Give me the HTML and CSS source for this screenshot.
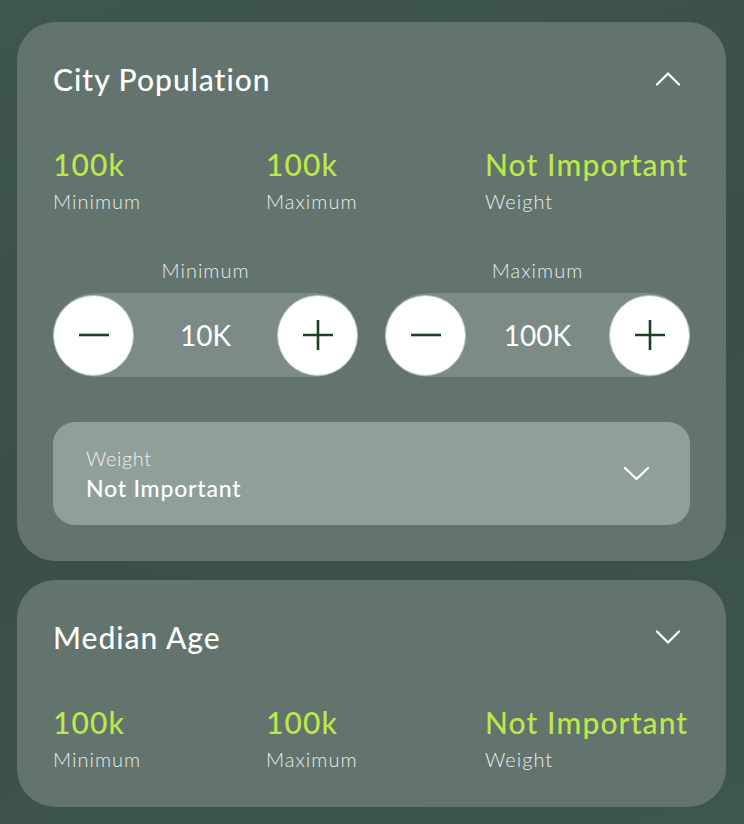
FILE: index.html
```html
<!DOCTYPE html>
<html lang="en">
<head>
    <meta charset="UTF-8">
    <meta name="viewport" content="width=device-width, initial-scale=1.0">
    <title>Filters</title>
    <link rel="stylesheet" href="styles.css">
</head>
<body>
    <div class="filters">
        <section class="card">
            <div class="card-header">
                <h2>City Population</h2>
                <svg class="chevron" width="26" height="14" viewBox="0 0 26 14"><path d="M2 12.5 L13 1.5 L24 12.5" /></svg>
            </div>

            <div class="stats">
                <div class="stat">
                    <span class="stat-value">100k</span>
                    <span class="stat-label">Minimum</span>
                </div>
                <div class="stat">
                    <span class="stat-value">100k</span>
                    <span class="stat-label">Maximum</span>
                </div>
                <div class="stat">
                    <span class="stat-value">Not Important</span>
                    <span class="stat-label">Weight</span>
                </div>
            </div>

            <div class="steppers">
                <div class="stepper-group">
                    <span class="stepper-title">Minimum</span>
                    <div class="stepper">
                        <button class="step-btn">
                            <svg width="34" height="34" viewBox="0 0 34 34"><path d="M2 17 H32" /></svg>
                        </button>
                        <span class="step-value">10K</span>
                        <button class="step-btn">
                            <svg width="34" height="34" viewBox="0 0 34 34"><path d="M2 17 H32 M17 2 V32" /></svg>
                        </button>
                    </div>
                </div>
                <div class="stepper-group">
                    <span class="stepper-title">Maximum</span>
                    <div class="stepper">
                        <button class="step-btn">
                            <svg width="34" height="34" viewBox="0 0 34 34"><path d="M2 17 H32" /></svg>
                        </button>
                        <span class="step-value">100K</span>
                        <button class="step-btn">
                            <svg width="34" height="34" viewBox="0 0 34 34"><path d="M2 17 H32 M17 2 V32" /></svg>
                        </button>
                    </div>
                </div>
            </div>

            <div class="select">
                <div class="select-text">
                    <span class="select-label">Weight</span>
                    <span class="select-value">Not Important</span>
                </div>
                <svg class="chevron small" width="25" height="13" viewBox="0 0 25 13"><path d="M1 1 L12.5 12 L24 1" /></svg>
            </div>
        </section>

        <section class="card">
            <div class="card-header">
                <h2>Median Age</h2>
                <svg class="chevron" width="26" height="14" viewBox="0 0 26 14"><path d="M2 1.5 L13 12.5 L24 1.5" /></svg>
            </div>

            <div class="stats">
                <div class="stat">
                    <span class="stat-value">100k</span>
                    <span class="stat-label">Minimum</span>
                </div>
                <div class="stat">
                    <span class="stat-value">100k</span>
                    <span class="stat-label">Maximum</span>
                </div>
                <div class="stat">
                    <span class="stat-value">Not Important</span>
                    <span class="stat-label">Weight</span>
                </div>
            </div>
        </section>
    </div>
</body>
</html>
```

FILE: styles.css
```css
body {
    margin: 0;
    min-height: 100vh;
    font-family: Lato, "Open Sans", sans-serif;
    background: linear-gradient(160deg, #3f5550 0%, #3b4f48 50%, #3e5650 100%);
    color: white;
}
.filters {
    display: flex;
    flex-direction: column;
    gap: 19px;
    padding: 22px 18px 18px 17px;
}
.card {
    background: #63736e;
    border-radius: 38px;
    padding: 36px 36px 36px 36px;
}
.card-header {
    display: flex;
    align-items: center;
    justify-content: space-between;
    height: 42px;
}
h2 {
    margin: 0;
    font-size: 30px;
    font-weight: 500;
    letter-spacing: 1px;
}
.chevron {
    margin-right: 9px;
    fill: none;
    stroke: white;
    stroke-width: 2.2;
    stroke-linecap: round;
    stroke-linejoin: round;
}
.chevron.small {
    margin-right: 41px;
}
.stats {
    display: grid;
    grid-template-columns: 213px 219px 1fr;
    margin-top: 47px;
}
.stat {
    display: flex;
    flex-direction: column;
}
.stat-value {
    font-size: 30px;
    line-height: 34px;
    font-weight: 500;
    letter-spacing: 1.1px;
    color: #bbe84b;
}
.stat-label {
    margin-top: 8px;
    font-size: 20px;
    line-height: 24px;
    font-weight: 300;
    letter-spacing: 1px;
    color: #e9ecea;
}
.steppers {
    display: flex;
    gap: 27px;
    margin-top: 45px;
}
.stepper-group {
    flex: 1;
    display: flex;
    flex-direction: column;
    align-items: center;
    gap: 11px;
}
.stepper-title {
    font-size: 20px;
    line-height: 24px;
    font-weight: 300;
    letter-spacing: 1px;
    color: #e9ecea;
}
.stepper {
    align-self: stretch;
    display: flex;
    align-items: center;
    justify-content: space-between;
    height: 84px;
    background: #7c8b86;
    border-radius: 42px;
}
.step-btn {
    width: 81px;
    height: 81px;
    border-radius: 50%;
    border: 1px solid #b9c2bf;
    background: white;
    display: flex;
    align-items: center;
    justify-content: center;
    padding: 0;
}
.step-btn svg {
    fill: none;
    stroke: #1c4224;
    stroke-width: 2.6;
}
.step-value {
    font-size: 28px;
    font-weight: 400;
    color: white;
}
.select {
    display: flex;
    align-items: center;
    justify-content: space-between;
    margin-top: 45px;
    height: 103px;
    padding-left: 33px;
    background: #919f9b;
    border-radius: 22px;
}
.select-text {
    display: flex;
    flex-direction: column;
    gap: 4px;
}
.select-label {
    font-size: 20px;
    line-height: 24px;
    font-weight: 300;
    letter-spacing: 0.6px;
    color: #eef1f0;
}
.select-value {
    font-size: 23px;
    line-height: 28px;
    font-weight: 500;
    letter-spacing: 0.8px;
    color: white;
}
```
